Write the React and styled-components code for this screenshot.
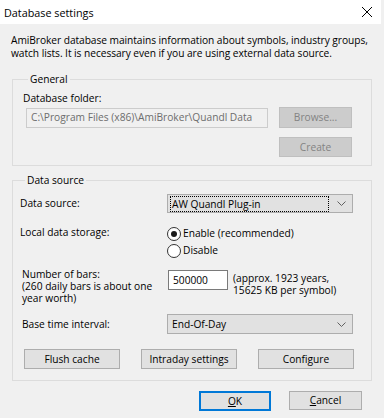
import React, { useState } from 'react';
import styled, { createGlobalStyle } from 'styled-components';

const Global = createGlobalStyle`
  html, body {
    margin: 0;
    padding: 0;
    background: #f0f0f0;
  }
  body {
    font-family: "Segoe UI", "Open Sans", sans-serif;
    font-size: 10.2px;
    line-height: 13px;
    color: #000;
    white-space: nowrap;
  }
`

const Window = styled.div`
  width: 381px;
  height: 418px;
  background: #f0f0f0;
  display: flex;
  flex-direction: column;
  overflow: hidden;
`

const TitleBar = styled.div`
  height: 24px;
  background: #fff;
  display: flex;
  align-items: center;
  justify-content: space-between;
  padding: 0 9px 0 4px;
  font-size: 10.8px;
`

const Body = styled.div`
  padding: 9px 9px 0 11px;
  display: flex;
  flex-direction: column;
`

const Desc = styled.p`
  margin: 0 0 14px 0;
  line-height: 12.5px;
  padding-top: 1px;
  letter-spacing: -0.05px;
`

const Group = styled.fieldset`
  margin: ${p => p.$top || 0}px 0 0 1px;
  padding: ${p => p.$pad};
  border: 1px solid #dcdcdc;
  min-width: 0;
`

const Legend = styled.legend`
  padding: 0 2px;
  margin-left: 5px;
  line-height: 13px;
`

const Label = styled.div`
  line-height: ${p => p.$lh || 13}px;
  padding-left: ${p => p.$indent || 0}px;
`

const FolderRow = styled.div`
  display: flex;
  align-items: center;
  margin-top: 2px;
`

const TextBox = styled.div`
  box-sizing: border-box;
  height: 20px;
  width: ${p => p.$w}px;
  margin-left: ${p => p.$ml || 0}px;
  margin-top: ${p => p.$mt || 0}px;
  border: 1px solid ${p => (p.$disabled ? '#cccccc' : '#7a7a7a')};
  background: ${p => (p.$disabled ? '#f0f0f0' : '#fff')};
  color: ${p => (p.$disabled ? '#6d6d6d' : '#000')};
  padding: 0 4px;
  display: flex;
  align-items: center;
  overflow: hidden;
`

const Button = styled.button`
  box-sizing: border-box;
  font: inherit;
  height: ${p => p.$h || 21}px;
  width: ${p => p.$w || 72}px;
  margin: 0;
  padding: 0;
  background: ${p => (p.disabled ? '#cccccc' : '#e1e1e1')};
  border: ${p => (p.$default ? '2px solid #0078d7' : p.disabled ? '1px solid #bfbfbf' : '1px solid #adadad')};
  color: ${p => (p.disabled ? '#838383' : '#000')};
  u { text-decoration: underline; }
`

const CreateRow = styled.div`
  display: flex;
  justify-content: flex-end;
  margin-top: 9px;
`

const Grid = styled.div`
  display: grid;
  grid-template-columns: 147px 1fr;
  align-items: ${p => p.$align || 'center'};
  margin-top: ${p => p.$mt || 0}px;
`

const Select = styled.div`
  box-sizing: border-box;
  height: ${p => p.$h || 20}px;
  width: 186px;
  background: #e1e1e1;
  border: 1px solid #adadad;
  display: flex;
  align-items: center;
  justify-content: space-between;
  padding: 0 6px 0 3px;
`

const SelText = styled.span`
  line-height: 13px;
  padding: 1px 1px 0;
  outline: ${p => (p.$focus ? '1px dotted #000' : 'none')};
  flex: ${p => (p.$focus ? 1 : 'none')};
  margin-right: 9px;
`

const Radios = styled.div`
  display: flex;
  flex-direction: column;
  gap: 2px;
`

const RadioRow = styled.label`
  display: flex;
  align-items: center;
  gap: 2px;
  height: 15px;
`

const Circle = styled.span`
  box-sizing: border-box;
  width: 14px;
  height: 14px;
  border-radius: 50%;
  border: 1px solid #333;
  background: #fff;
  display: flex;
  align-items: center;
  justify-content: center;
  &::after {
    content: '';
    width: 6px;
    height: 6px;
    border-radius: 50%;
    background: ${p => (p.$on ? '#1a1a1a' : 'transparent')};
  }
`

const BarsRow = styled.div`
  display: flex;
  align-items: flex-start;
  gap: 5px;
`

const Note = styled.div`
  line-height: 12px;
  margin-top: 4px;
`

const ButtonRow = styled.div`
  display: flex;
  justify-content: space-between;
  padding: 0 0 0 4px;
  margin-top: 15px;
`

const Footer = styled.div`
  display: flex;
  justify-content: flex-end;
  align-items: flex-start;
  gap: 18px;
  padding: 10px 10px 0 0;
`

function Chevron() {
  return (
    <svg width="9" height="5" viewBox="0 0 9 5">
      <path d="M0.5 0.5 L4.5 4.5 L8.5 0.5" fill="none" stroke="#606060" strokeWidth="1" />
    </svg>
  )
}

function CloseIcon() {
  return (
    <svg width="10" height="10" viewBox="0 0 10 10">
      <path d="M0 0 L10 10 M10 0 L0 10" stroke="#000" strokeWidth="1" />
    </svg>
  )
}

export default function App() {
  const [storage, setStorage] = useState('enable')

  return (
    <Window>
      <Global />
      <TitleBar>
        <span>Database settings</span>
        <CloseIcon />
      </TitleBar>
      <Body>
        <Desc>
          AmiBroker database maintains information about symbols, industry groups,
          <br />
          watch lists. It is necessary even if you are using external data source.
        </Desc>

        <Group $pad="6px 19px 8px 10px">
          <Legend>General</Legend>
          <Label>Database folder:</Label>
          <FolderRow>
            <TextBox $disabled $w={242} $ml={3}>C:\Program Files (x86)\AmiBroker\Quandl Data</TextBox>
            <span style={{ flex: 1 }} />
            <Button disabled $w={73}>Browse...</Button>
          </FolderRow>
          <CreateRow>
            <Button disabled $w={73} $h={20}>Create</Button>
          </CreateRow>
        </Group>

        <Group $top={8} $pad="7px 17px 11px 7px">
          <Legend>Data source</Legend>
          <Grid>
            <Label>Data source:</Label>
            <Select $h={19}>
              <SelText $focus>AW Quandl Plug-in</SelText>
              <Chevron />
            </Select>
          </Grid>
          <Grid $mt={13} $align="start">
            <Label>Local data storage:</Label>
            <Radios>
              <RadioRow onClick={() => setStorage('enable')}>
                <Circle $on={storage === 'enable'} />
                Enable (recommended)
              </RadioRow>
              <RadioRow onClick={() => setStorage('disable')}>
                <Circle $on={storage === 'disable'} />
                Disable
              </RadioRow>
            </Radios>
          </Grid>
          <Grid $mt={10} $align="start">
            <Label $indent={2} $lh={12}>
              Number of bars:
              <br />
              (260 daily bars is about one
              <br />
              year worth)
            </Label>
            <BarsRow>
              <TextBox $w={60} $ml={1} $mt={2}>500000</TextBox>
              <Note>
                (approx. 1923 years,
                <br />
                15625 KB per symbol)
              </Note>
            </BarsRow>
          </Grid>
          <Grid $mt={10}>
            <Label $indent={2}>Base time interval:</Label>
            <Select>
              <SelText>End-Of-Day</SelText>
              <Chevron />
            </Select>
          </Grid>
          <ButtonRow>
            <Button $w={96} $h={20}>Flush cache</Button>
            <Button $w={96} $h={20}>Intraday settings</Button>
            <Button $w={96} $h={20}>Configure</Button>
          </ButtonRow>
        </Group>

        <Footer>
          <Button $default $w={72} $h={20}><u>O</u>K</Button>
          <Button $w={73} $h={19}><u>C</u>ancel</Button>
        </Footer>
      </Body>
    </Window>
  )
}
